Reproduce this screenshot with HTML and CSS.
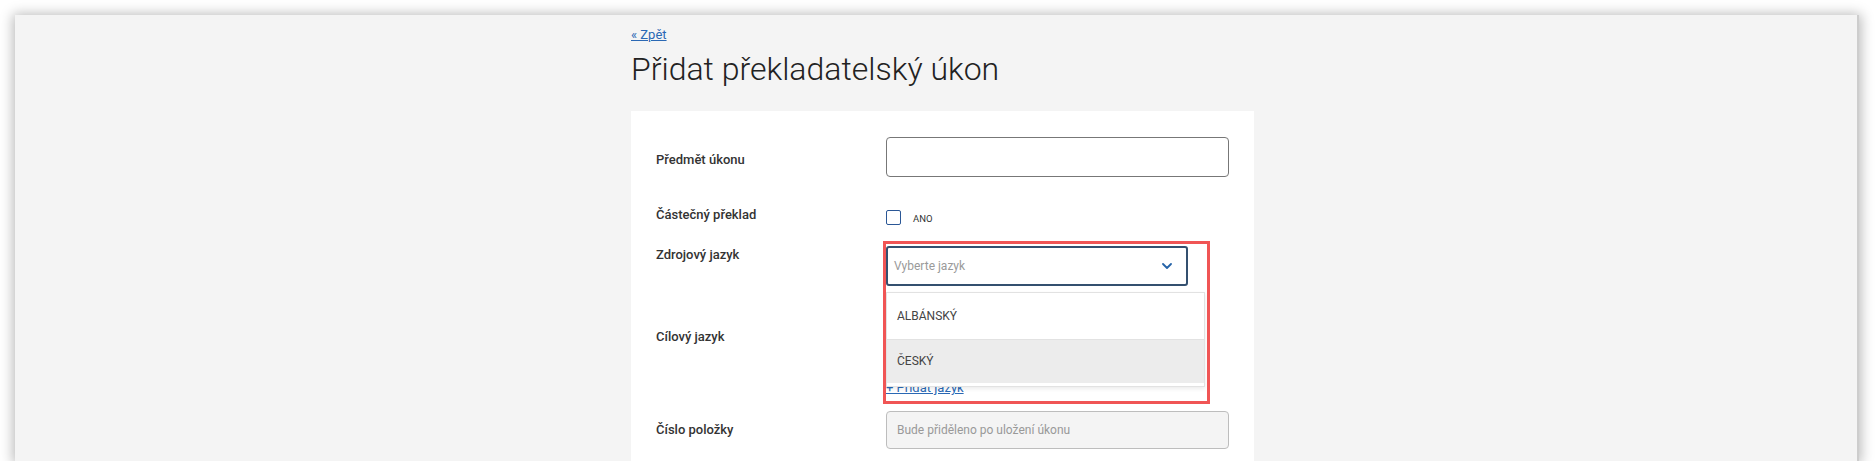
FILE: index.html
```html
<!DOCTYPE html>
<html>
<head>
	<title>Přidat překladatelský úkon</title>
	<link rel="stylesheet" href="styles.css">
</head>
<body>
	<div class="frame">
		<div class="page">
			<a class="back" href="#">&laquo; Zpět</a>
			<h1 class="title">Přidat překladatelský úkon</h1>

			<div class="card">
				<div class="row row-subject">
					<div class="label">Předmět úkonu</div>
					<div class="field">
						<div class="input"></div>
					</div>
				</div>

				<div class="row row-partial">
					<div class="label">Částečný překlad</div>
					<div class="field check">
						<span class="box"></span>
						<span class="check-text">ANO</span>
					</div>
				</div>

				<div class="row row-source">
					<div class="label">Zdrojový jazyk</div>
					<div class="field menu-anchor">
						<div class="select focused">
							<span class="placeholder">Vyberte jazyk</span>
							<svg class="chevron" width="10" height="6" viewBox="0 0 10 6"><path d="M1 1l4 4 4-4" fill="none" stroke="#2563a8" stroke-width="1.8" stroke-linecap="round" stroke-linejoin="round"/></svg>
						</div>
						<ul class="menu">
							<li>ALBÁNSKÝ</li>
							<li class="hover">ČESKÝ</li>
						</ul>
						<div class="highlight"></div>
					</div>
				</div>

				<div class="row row-target">
					<div class="label">Cílový jazyk</div>
					<div class="field">
						<div class="select">
							<span class="placeholder">Vyberte jazyk</span>
						</div>
						<a class="add" href="#">+ Přidat jazyk</a>
					</div>
				</div>

				<div class="row row-number">
					<div class="label">Číslo položky</div>
					<div class="field">
						<div class="input disabled">Bude přiděleno po uložení úkonu</div>
					</div>
				</div>
			</div>
		</div>
	</div>
</body>
</html>
```

FILE: styles.css
```css
body {
	margin: 0;
	padding: 0;
	background-color: #ffffff;
	font-family: Roboto, "Liberation Sans", sans-serif;
	color: #333;
}

.frame {
	margin: 15px 0 0 15px;
	width: 1842px;
	height: 446px;
	background-color: #f4f4f4;
	border-right: 2px solid #cdcdcd;
	box-shadow: 0 1px 12px 2px rgba(0, 0, 0, 0.28);
	overflow: hidden;
}

.page {
	margin-left: 616px;
	width: 623px;
	padding-top: 12px;
}

.back {
	display: block;
	width: max-content;
	font-size: 13px;
	line-height: 16px;
	color: #2a68b4;
	text-decoration: underline;
}

.title {
	margin: 6px 0 22px 0;
	font-size: 32px;
	line-height: 40px;
	font-weight: 300;
	color: #222;
}

.card {
	background-color: white;
	padding: 26px 25px 60px 25px;
}

.row {
	display: flex;
}

.label {
	width: 230px;
	flex-shrink: 0;
	font-size: 13px;
	line-height: 18px;
	font-weight: 500;
	color: #333;
}

.field {
	width: 343px;
}

.input {
	box-sizing: border-box;
	height: 40px;
	border: 1px solid #777;
	border-radius: 4px;
	background-color: white;
}

.row-subject .label {
	padding-top: 14px;
}

.row-partial {
	margin-top: 27px;
}

.row-partial .label {
	padding-top: 2px;
}

.check {
	display: flex;
	align-items: center;
	height: 18px;
	padding-top: 4px;
}

.box {
	box-sizing: border-box;
	width: 15px;
	height: 15px;
	border: 1.5px solid #2b5796;
	border-radius: 2px;
}

.check-text {
	margin-left: 12px;
	margin-top: 2px;
	font-size: 9.5px;
	color: #333;
}

.row-source {
	margin-top: 20px;
}

.select {
	box-sizing: border-box;
	width: 302px;
	height: 40px;
	display: flex;
	align-items: center;
	justify-content: space-between;
	padding: 0 14px 0 7px;
	border: 1px solid #888;
	border-radius: 3px;
	background-color: white;
}

.select.focused {
	border: 2px solid #34506f;
	padding-left: 6px;
}

.placeholder {
	font-size: 12px;
	color: #9a9a9a;
}

.menu-anchor {
	position: relative;
}

.menu {
	position: absolute;
	top: 46px;
	left: 0;
	width: 319px;
	box-sizing: border-box;
	margin: 0;
	padding: 0 0 3px 0;
	list-style: none;
	background-color: white;
	border: 1px solid #e2e2e2;
	box-shadow: 0 2px 4px rgba(0, 0, 0, 0.08);
	z-index: 2;
}

.menu li {
	height: 46px;
	line-height: 46px;
	padding-left: 10px;
	font-size: 12px;
	color: #444;
}

.menu li.hover {
	height: 43px;
	line-height: 43px;
	border-top: 1px solid #e2e2e2;
	background-color: #ececec;
}

.highlight {
	position: absolute;
	top: -5px;
	left: -3px;
	width: 327px;
	height: 163px;
	box-sizing: border-box;
	border: 3px solid #f05555;
	z-index: 3;
}

.row-target {
	margin-top: 42px;
}

.add {
	display: block;
	width: max-content;
	margin-top: 11px;
	font-size: 13px;
	line-height: 18px;
	color: #2a68b4;
	text-decoration: underline;
}

.row-number {
	margin-top: 14px;
}

.row-number .label {
	padding-top: 10px;
}

.input.disabled {
	height: 38px;
	line-height: 36px;
	padding-left: 10px;
	font-size: 12px;
	color: #999;
	background-color: #f4f4f4;
	border-color: #bdbdbd;
}
```
